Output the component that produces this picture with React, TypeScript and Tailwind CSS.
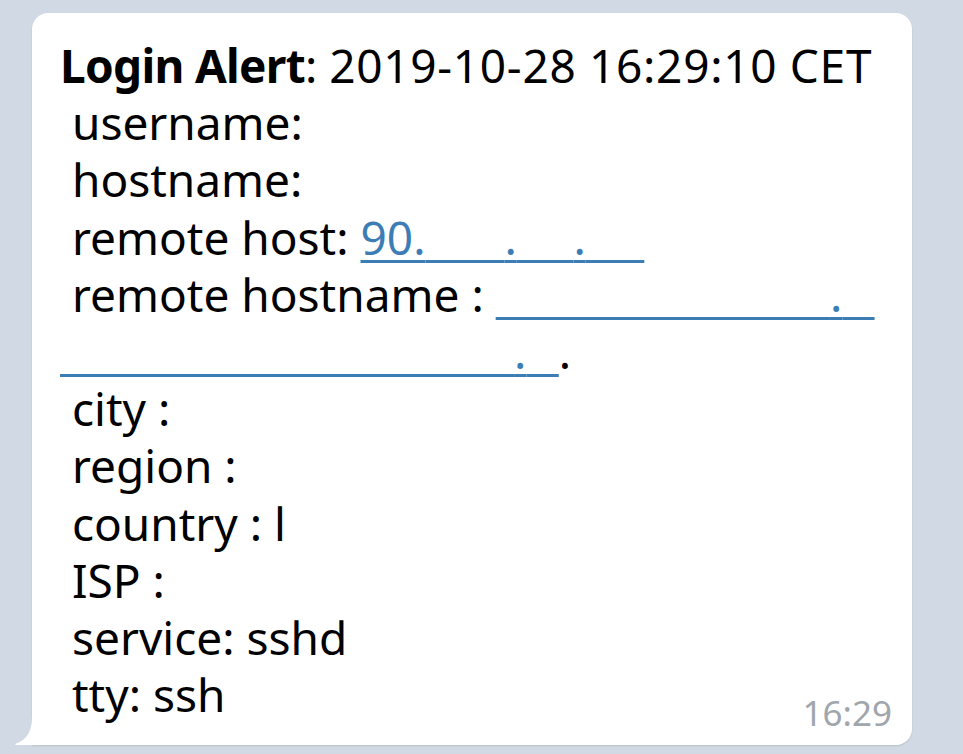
export default function App() {
  const link = "text-[#3c7db5] underline decoration-[#3c7db5] decoration-[3px] underline-offset-[5px]"

  return (
    <div className="min-h-screen w-full overflow-hidden bg-[#d1dae4] pt-[13px]">
      <div className="relative ml-[32px] w-[880px] rounded-[16px] rounded-bl-none bg-white pt-[24px] pb-[22px] pl-[28px] pr-[20px] shadow-[0_1px_2px_rgba(0,0,0,0.12)]">
        {/* bubble tail */}
        <svg
          className="absolute bottom-0 left-[-17px]"
          width="18"
          height="28"
          viewBox="0 0 18 28"
        >
          <path d="M18 0 L17 0 C17 14 12 23 1 26.5 C0 27 0 28 1 28 L18 28 Z" fill="#ffffff" />
        </svg>

        <div
          className="whitespace-pre text-[46px] leading-[57.2px] text-black"
          style={{ fontFamily: '"Noto Sans", "Open Sans", sans-serif' }}
        >
          <div>
            <span className="font-bold tracking-[-0.7px]">Login Alert</span>:{" "}
            <span className="tracking-[0.7px]">2019-10-28 16:29:10 CET</span>
          </div>
          <div> username: </div>
          <div> hostname: </div>
          <div>
            {" remote host: "}
            <span className={link}>
              90.<span className="text-white">000</span>.
              <span className="text-white tracking-[2px]">00</span>.
              <span className="text-white tracking-[3px]">00</span>
            </span>
          </div>
          <div>
            {" remote hostname : "}
            <span className={link}>
              <span className="text-white tracking-[-0.6px]">0000000000000</span>.
              <span className="text-white tracking-[6px]">0</span>
              <br />
              <span className="text-white tracking-[0.4px]">00000000000000000</span>.
              <span className="text-white tracking-[6px]">0</span>
            </span>
            .
          </div>
          <div> city :</div>
          <div> region :</div>
          <div> country : l</div>
          <div> ISP : </div>
          <div> service: sshd</div>
          <div> tty: ssh</div>
        </div>

        <span
          className="absolute right-[20px] bottom-[15px] text-[35px] leading-none text-[#a0a6ac]"
          style={{ fontFamily: '"Noto Sans", "Open Sans", sans-serif' }}
        >
          16:29
        </span>
      </div>
    </div>
  )
}
